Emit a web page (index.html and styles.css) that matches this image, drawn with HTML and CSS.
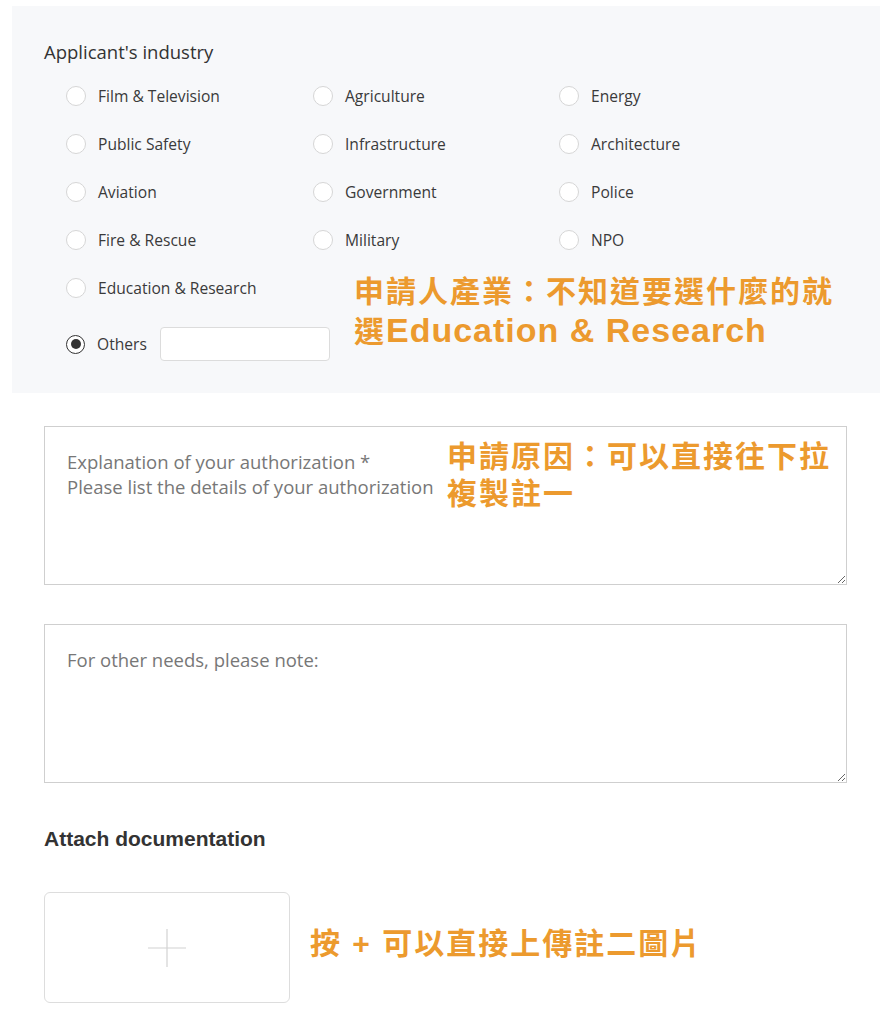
FILE: index.html
```html
<!DOCTYPE html>
<html lang="en">

<head>
    <meta charset="UTF-8" />
    <meta name="viewport" content="width=device-width, initial-scale=1.0" />
    <title>Application form</title>
    <link rel="stylesheet" href="styles.css">
</head>

<body>
    <div class="industry-panel">
        <p class="field-title">Applicant's industry</p>
        <div class="radio-grid">
            <label class="radio-item"><span class="radio"></span>Film &amp; Television</label>
            <label class="radio-item"><span class="radio"></span>Agriculture</label>
            <label class="radio-item"><span class="radio"></span>Energy</label>
            <label class="radio-item"><span class="radio"></span>Public Safety</label>
            <label class="radio-item"><span class="radio"></span>Infrastructure</label>
            <label class="radio-item"><span class="radio"></span>Architecture</label>
            <label class="radio-item"><span class="radio"></span>Aviation</label>
            <label class="radio-item"><span class="radio"></span>Government</label>
            <label class="radio-item"><span class="radio"></span>Police</label>
            <label class="radio-item"><span class="radio"></span>Fire &amp; Rescue</label>
            <label class="radio-item"><span class="radio"></span>Military</label>
            <label class="radio-item"><span class="radio"></span>NPO</label>
            <label class="radio-item"><span class="radio"></span>Education &amp; Research</label>
        </div>
        <div class="radio-item others-row">
            <span class="radio checked"></span>Others
            <input type="text" class="others-input" />
        </div>

        <p class="note note-industry">申請人產業：不知道要選什麼的就<br>選<span class="latin">Education &amp; Research</span></p>
    </div>

    <div class="form-body">
        <div class="area-wrap">
            <textarea class="text-area" placeholder="Explanation of your authorization *&#10;Please list the details of your authorization"></textarea>
            <p class="note note-reason">申請原因：可以直接往下拉<br>複製註一</p>
        </div>

        <div class="area-wrap second">
            <textarea class="text-area" placeholder="For other needs, please note:"></textarea>
        </div>

        <h3 class="attach-title">Attach documentation</h3>

        <div class="upload-row">
            <div class="upload-box">
                <svg width="40" height="40" viewBox="0 0 40 40">
                    <line x1="20" y1="1" x2="20" y2="39" stroke="#d2d2d2" stroke-width="1.2" />
                    <line x1="1" y1="20" x2="39" y2="20" stroke="#d2d2d2" stroke-width="1.2" />
                </svg>
            </div>
            <p class="note note-upload">按 + 可以直接上傳註二圖片</p>
        </div>
    </div>
</body>

</html>
```

FILE: styles.css
```css
body {
    margin: 0;
    background-color: #ffffff;
    font-family: "Open Sans", "Noto Sans", sans-serif;
    color: #333333;
}

.industry-panel {
    position: relative;
    margin: 6px 13px 0 12px;
    height: 387px;
    box-sizing: border-box;
    padding: 30px 0 0 32px;
    background-color: #f7f8fa;
}

.field-title {
    margin: 0;
    font-size: 18.5px;
    line-height: 32px;
    color: #333333;
}

.radio-grid {
    display: grid;
    grid-template-columns: 247px 246px 246px;
    margin: 4px 0 0 22px;
}

.radio-item {
    display: flex;
    align-items: center;
    height: 48px;
    font-size: 15.6px;
    color: #3a3a3a;
}

.radio {
    width: 18px;
    height: 18px;
    border: 1px solid #d6d6d6;
    border-radius: 50%;
    background-color: #ffffff;
    margin-right: 12px;
    flex-shrink: 0;
    position: relative;
}

.radio.checked {
    border: 1.5px solid #333333;
    width: 17px;
    height: 17px;
}

.radio.checked::after {
    content: "";
    position: absolute;
    left: 3.5px;
    top: 3.5px;
    width: 10px;
    height: 10px;
    border-radius: 50%;
    background-color: #333333;
}

.others-row {
    margin: 8px 0 0 22px;
}

.others-input {
    width: 170px;
    height: 34px;
    box-sizing: border-box;
    margin-left: 13px;
    border: 1px solid #dcdcdc;
    border-radius: 4px;
    background-color: #ffffff;
}

.note {
    margin: 0;
    color: #ec9a2e;
    font-family: "Liberation Sans", "Noto Sans CJK TC", sans-serif;
    font-weight: bold;
    font-size: 30px;
    letter-spacing: 2px;
}

.note .latin {
    font-size: 34px;
    letter-spacing: 1px;
}

.note-industry {
    position: absolute;
    left: 342px;
    top: 266px;
    line-height: 39px;
}

.form-body {
    padding: 33px 46px 0 44px;
}

.area-wrap {
    position: relative;
}

.area-wrap.second {
    margin-top: 39px;
}

.text-area {
    display: block;
    width: 100%;
    height: 159px;
    box-sizing: border-box;
    padding: 22px 22px;
    border: 1px solid #cfcfcf;
    border-radius: 0;
    font-family: "Open Sans", "Noto Sans", sans-serif;
    font-size: 18.5px;
    line-height: 25px;
    color: #333333;
    resize: vertical;
}

.text-area::placeholder {
    color: #777777;
}

.note-reason {
    position: absolute;
    left: 403px;
    top: 12px;
    line-height: 37px;
}

.attach-title {
    margin: 43px 0 0 0;
    font-family: "Liberation Sans", sans-serif;
    font-size: 21px;
    line-height: 26px;
    color: #333333;
}

.upload-row {
    display: flex;
    align-items: center;
    gap: 20px;
    margin-top: 40px;
}

.upload-box {
    width: 246px;
    height: 111px;
    box-sizing: border-box;
    border: 1px solid #dddddd;
    border-radius: 6px;
    display: flex;
    justify-content: center;
    align-items: center;
}

.note-upload {
    line-height: 36px;
    margin-top: -8px;
}
```
